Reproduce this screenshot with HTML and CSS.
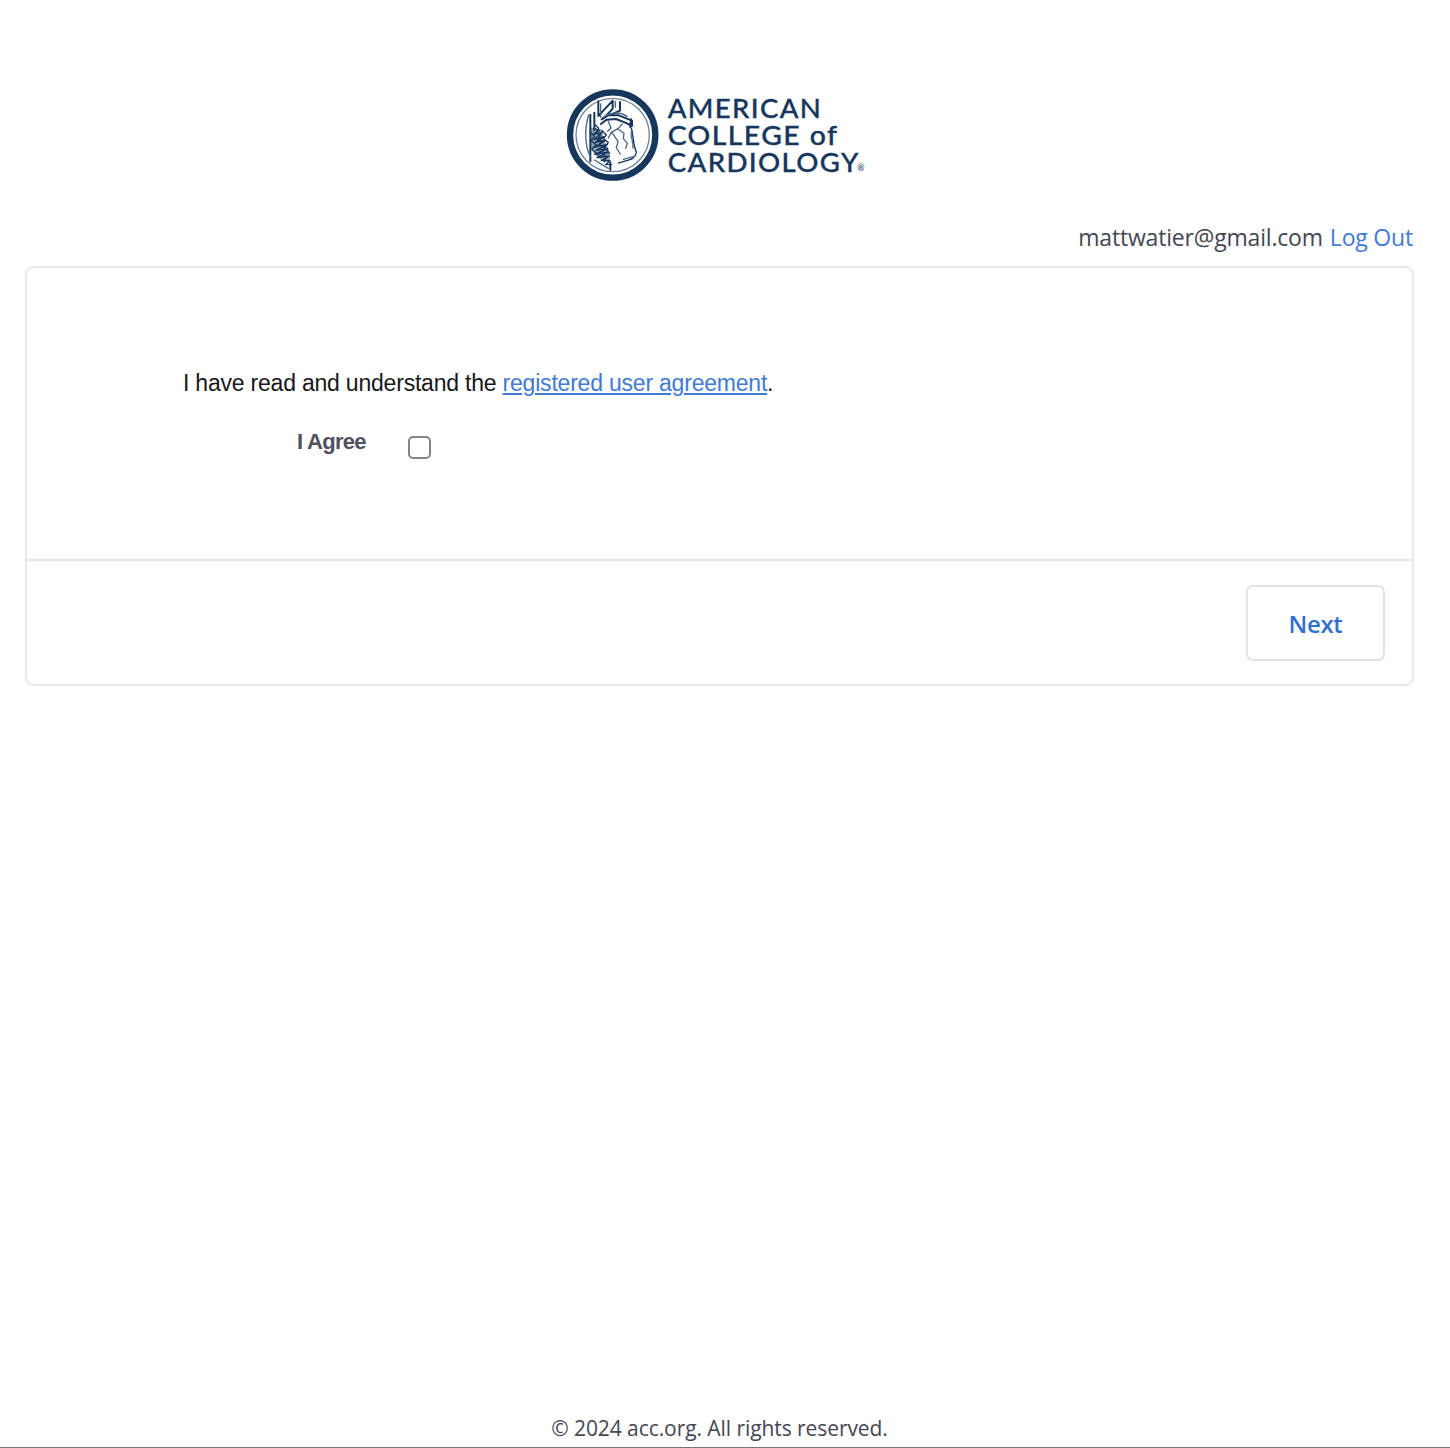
FILE: index.html
```html
<!DOCTYPE html>
<html lang="en">
<head>
<meta charset="utf-8">
<title>American College of Cardiology</title>
<link rel="stylesheet" href="styles.css">
</head>
<body>
<div class="page">
  <header class="brand">
    <svg class="logo" viewBox="0 0 960 330" role="img" aria-label="American College of Cardiology">
      <g fill="none" stroke="#16365c" stroke-linecap="round" stroke-linejoin="round">
        <circle cx="158" cy="165" r="128" stroke-width="19"/>
        <circle cx="158" cy="165" r="110" stroke-width="4" stroke="#6f849f"/>
        <path fill="#8c9db3" stroke="none" d="M92 142L125 150L133 184L145 205L151 247L126 242L104 224L91 200Z"/>
        <path stroke-width="6" d="M115 64V108L130 92L158 62V86L138 108M180 66V92L154 103M91 104V244M103 98V150M125 118L147 105L176 106L216 122V138L196 128L168 117L139 119L123 132M213 118L211 142M151 248V270"/>
        <path stroke-width="4" d="M214 145C221 170 218 190 229 216M229 218C225 240 205 239 176 249"/>
        <path stroke-width="4" stroke="#4c6686" d="M86 105C72 150 75 199 91 230M122 72V112M166 64V82M128 113C148 98 178 93 201 109M144 122L153 144L143 154M187 132L175 145L154 157L145 174M174 147L192 160L190 174M156 158L174 184L169 204L181 222M190 176L202 190L197 205M216 150C207 166 222 184 219 204M190 238L222 229M103 240L145 265"/>
        <path stroke-width="4" d="M101 145L119 151L99 163L126 158L102 178L132 170L106 187L137 181L102 202L142 193L109 211L143 206L104 223L146 216L111 233L148 228L124 242L150 242L137 254L155 253"/>
        <path stroke-width="4" d="M106 135L116 145L109 157L121 167L112 178L128 184L118 194L135 204L123 218L139 231L133 246M91 157L103 169L94 182L108 194L95 208L116 225M125 151L139 165L130 175L145 188L134 201L149 221"/>
      </g>
      <g class="logo-name">
        <text x="323" y="115" textLength="464" lengthAdjust="spacingAndGlyphs">AMERICAN</text>
        <text x="323" y="195" textLength="512" lengthAdjust="spacingAndGlyphs">COLLEGE of</text>
        <text x="323" y="275" textLength="576" lengthAdjust="spacingAndGlyphs">CARDIOLOGY</text>
        <text class="mark" x="892" y="274">®</text>
      </g>
    </svg>
  </header>
  <div class="account"><span class="email">mattwatier@gmail.com</span><a class="logout" href="#">Log Out</a></div>
  <main class="card">
    <div class="card-body">
      <p class="statement">I have read and understand the <a href="#">registered user agreement</a>.</p>
      <label class="agree"><span class="agree-label">I Agree</span><input class="box" type="checkbox"></label>
    </div>
    <div class="card-actions"><button class="next" type="button">Next</button></div>
  </main>
  <footer class="footer"><span>© 2024 acc.org. All rights reserved.</span></footer>
</div>
</body>
</html>
```
FILE: styles.css
```css
* { box-sizing: border-box; }
body { margin: 0; background: #fff; color: #444653; font-family: "Open Sans", sans-serif; }
a { color: #427ad6; }
.page { height: 1448px; display: flex; flex-direction: column; padding: 80px 36px 0 25px; border-bottom: 1px solid #777; }
.brand { display: flex; justify-content: center; height: 110px; }
.logo { width: 320px; height: 110px; }
.logo-name { font: 500 80px Lato, sans-serif; letter-spacing: 4px; fill: #16365c; stroke: #16365c; stroke-width: 1px; }
.logo-name .mark { font-size: 26px; stroke-width: 0; letter-spacing: 0; }
.account { display: flex; justify-content: flex-end; gap: 7px; height: 76px; padding: 29px 1px 0 0; font-size: 23px; line-height: 36px; letter-spacing: -0.19px; white-space: nowrap; }
.logout { text-decoration: none; }
.card { height: 420px; border: 2px solid #e6e9f0; border-radius: 9px; }
.card-body { height: 293px; padding: 98px 0 0 156px; border-bottom: 2px solid #e2e3e6; font-family: "Liberation Sans", Arial, sans-serif; font-size: 23px; }
.statement { margin: 0; color: #17171b; line-height: 34px; letter-spacing: -0.21px; white-space: nowrap; }
.statement a { text-decoration-thickness: 2px; text-underline-offset: 2px; }
.agree { display: flex; align-items: flex-start; gap: 42px; margin: 25px 0 0 114px; line-height: 34px; }
.agree-label { width: 69px; font-weight: bold; font-size: 22px; letter-spacing: -0.7px; white-space: nowrap; color: #50515e; }
.box { appearance: none; width: 23px; height: 23px; margin: 11px 0 0; border: 2px solid #858585; border-radius: 5px; background: #fff; }
.card-actions { display: flex; justify-content: flex-end; padding: 24px 27px 0 0; }
.next { width: 139px; height: 76px; padding: 0; border: 2px solid #dfe3eb; border-radius: 7px; background: #fff; color: #3470d2; font: 600 24px "Open Sans", sans-serif; letter-spacing: -0.3px; }
.footer { display: flex; justify-content: center; margin-top: auto; height: 36px; font-size: 21px; line-height: 34px; letter-spacing: -0.07px; }
```
